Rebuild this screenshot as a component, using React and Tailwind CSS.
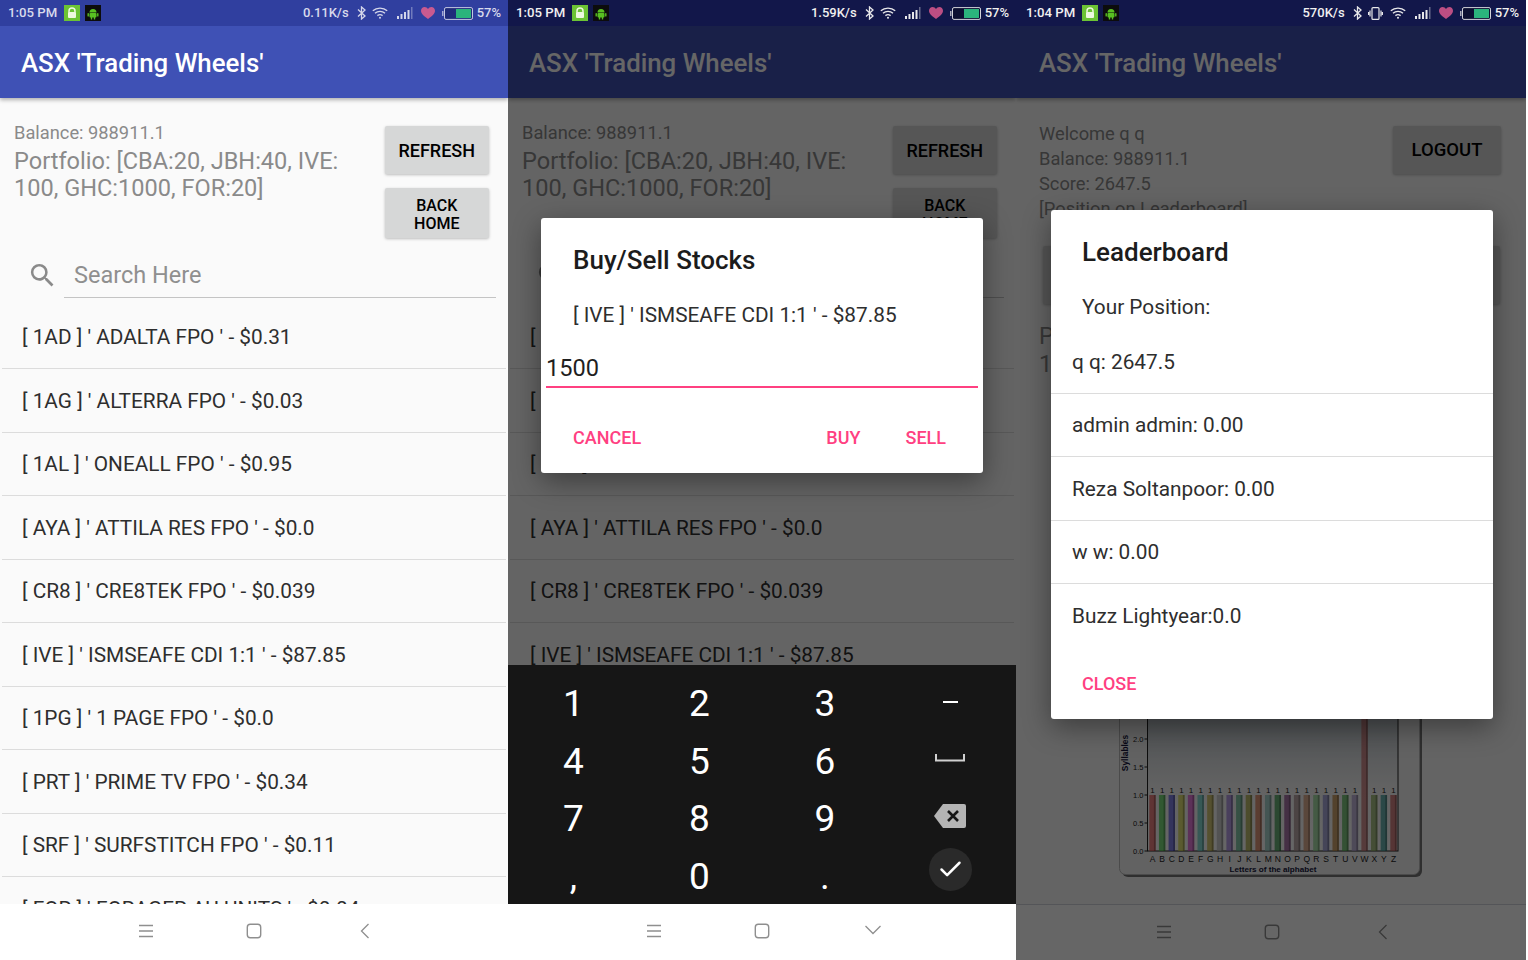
import { Check } from 'lucide-react';

const font = { fontFamily: 'Roboto, sans-serif' };

const stocks = [
  "[ 1AD ] ' ADALTA FPO ' - $0.31",
  "[ 1AG ] ' ALTERRA FPO ' - $0.03",
  "[ 1AL ] ' ONEALL FPO ' - $0.95",
  "[ AYA ] ' ATTILA RES FPO ' - $0.0",
  "[ CR8 ] ' CRE8TEK FPO ' - $0.039",
  "[ IVE ] ' ISMSEAFE CDI 1:1 ' - $87.85",
  "[ 1PG ] ' 1 PAGE FPO ' - $0.0",
  "[ PRT ] ' PRIME TV FPO ' - $0.34",
  "[ SRF ] ' SURFSTITCH FPO ' - $0.11",
  "[ FOR ] ' FORAGER AU UNITS ' - $0.04",
];

const leaders = ['q q: 2647.5', 'admin admin: 0.00', 'Reza Soltanpoor: 0.00', 'w w: 0.00', 'Buzz Lightyear:0.0'];

const letters = 'ABCDEFGHIJKLMNOPQRSTUVWXYZ'.split('');
const barColors = ['#e85a5a', '#4fd04f', '#5a5ae0', '#d8d84a', '#e04fd0', '#62d0c8', '#c8b84a', '#c0c0c0', '#a080e0', '#60b890', '#a8a840', '#d87850', '#90c8c0', '#3c9c50', '#904c90', '#a89090', '#d89870', '#90d890', '#9090d0', '#c08840', '#58b858', '#b0a0d0', '#c87070', '#90b060', '#3c9c98', '#c85c5c'];

function AppIcons() {
  return (
    <div className="flex items-center gap-[5px]">
      <svg width="16" height="16" viewBox="0 0 16 16">
        <rect width="16" height="16" fill="#6cc334" />
        <path d="M5 7.500V6a3 3 0 0 1 6 0v1.500" fill="none" stroke="#eef8e0" strokeWidth="1.500" />
        <rect x="4" y="7" width="8" height="6" rx="1" fill="#eef8e0" />
      </svg>
      <svg width="16" height="16" viewBox="0 0 16 16">
        <rect width="16" height="16" fill="#0c0c0c" />
        <path d="M4.500 7.500a3.500 3.500 0 0 1 7 0z" fill="#58c022" />
        <rect x="4.500" y="8" width="7" height="4.500" rx="1" fill="#58c022" />
        <rect x="2.500" y="8" width="1.400" height="3.600" rx=".7" fill="#58c022" />
        <rect x="12.100" y="8" width="1.400" height="3.600" rx=".7" fill="#58c022" />
        <rect x="5.800" y="12" width="1.400" height="2.500" fill="#58c022" />
        <rect x="8.800" y="12" width="1.400" height="2.500" fill="#58c022" />
      </svg>
    </div>
  );
}

function StatusBar({ time, speed, dim, vibrate, left = 'pl-2' }) {
  const stroke = dim ? '#e8e8ea' : '#d4d6ea';
  return (
    <div className={`relative z-20 h-[26px] shrink-0 flex items-center pr-[7px] ${left} ${dim ? 'bg-[#12174a] text-[#f0f0f0]' : 'bg-[#303f9f] text-[#d8daec]'}`}>
      <span className="text-[13.200px] font-medium mr-[7px]">{time}</span>
      <AppIcons />
      <div className="flex-1" />
      <span className="text-[13px] font-medium mr-2">{speed}</span>
      <svg width="9" height="14" viewBox="0 0 9 14" fill="none" stroke={stroke} strokeWidth="1.300" className="mr-[6px]">
        <path d="M1 3.500l7 6.500-3.500 3V1L8 4 1 10.500" />
      </svg>
      {vibrate && (
        <svg width="15" height="13" viewBox="0 0 15 13" fill="none" stroke={stroke} strokeWidth="1.200" className="mr-[7px]">
          <rect x="4" y=".6" width="7" height="11.800" rx="1" />
          <path d="M2 3.500v6M.6 5v3M13 3.500v6M14.400 5v3" />
        </svg>
      )}
      <svg width="16" height="12" viewBox="0 0 16 12" fill="none" stroke={stroke} strokeWidth="1.400" className="mr-[9px]">
        <path d="M.8 3.800c4-3.600 10.400-3.600 14.400 0M3 6.200c2.800-2.400 7.200-2.400 10 0M5.400 8.600c1.500-1.100 3.700-1.100 5.200 0" />
        <circle cx="8" cy="10.800" r="1" fill={stroke} stroke="none" />
      </svg>
      <svg width="16" height="12" viewBox="0 0 16 12" className="mr-[8px]">
        <rect x="0" y="9" width="2" height="3" fill={stroke} />
        <rect x="3.500" y="7" width="2" height="5" fill={stroke} />
        <rect x="7" y="5" width="2" height="7" fill={stroke} />
        <rect x="10.500" y="3" width="2" height="9" fill={stroke} />
        <rect x="14" y="0" width="1.500" height="12" fill={stroke} opacity=".4" />
      </svg>
      <svg width="14" height="12" viewBox="0 0 14 12" className="mr-[7px]">
        <path d="M7 12C2.500 8.600 0 6.400 0 3.700 0 1.500 1.700 0 3.600 0 5 0 6.300.8 7 2c.7-1.200 2-2 3.400-2C12.300 0 14 1.500 14 3.700 14 6.400 11.500 8.600 7 12z" fill={dim ? '#bc4e83' : '#c95a90'} />
      </svg>
      <svg width="31" height="13" viewBox="0 0 31 13" className="mr-[4px]">
        <rect x="0" y="4" width="1.500" height="5" fill={stroke} opacity=".7" />
        <rect x="2.500" y=".6" width="28" height="11.800" rx="1.500" fill={dim ? '#0c0f30' : '#1f2a78'} stroke={stroke} strokeWidth="1" opacity=".9" />
        <rect x="14" y="2" width="15" height="9" fill="#2bb47c" />
      </svg>
      <span className="text-[13px] font-medium">57%</span>
    </div>
  );
}

function AppBar({ left = 'pl-[21px]' }) {
  return (
    <div className={`relative z-0 h-[72px] shrink-0 bg-[#3f51b5] flex items-center pt-[3px] shadow-[0_2px_4px_rgba(0,0,0,0.3)] ${left}`}>
      <span className="text-[25.800px] font-medium text-white">ASX 'Trading Wheels'</span>
    </div>
  );
}

function NavBar({ dim, down, height = 'h-[56px]' }) {
  return (
    <div className={`shrink-0 bg-white flex items-start pt-[19px] relative ${height} ${dim ? 'border-t border-gray-300 pl-[2px]' : ''}`}>
      <svg width="16" height="14" viewBox="0 0 16 14" fill="none" stroke="#8f8f8f" strokeWidth="1.300" className="ml-[138px] mt-[1px]">
        <path d="M1 1.500h14M1 7h14M1 12.500h14" />
      </svg>
      <svg width="16" height="16" viewBox="0 0 16 16" fill="none" stroke="#8f8f8f" strokeWidth="1.400" className="ml-[92px]">
        <rect x="1.300" y="1.300" width="13.400" height="13.400" rx="3" />
      </svg>
      {down ? (
        <svg width="18" height="12" viewBox="0 0 18 12" fill="none" stroke="#8f8f8f" strokeWidth="1.300" className="ml-[94px] mt-[1px]">
          <path d="M1.500 2L9 9.500 16.500 2" />
        </svg>
      ) : (
        <svg width="10" height="16" viewBox="0 0 10 16" fill="none" stroke="#8f8f8f" strokeWidth="1.300" className="ml-[98px]">
          <path d="M8.500 1L1.500 8l7 7" />
        </svg>
      )}
    </div>
  );
}

function GreyButton({ className, children }) {
  return (
    <div className={`bg-[#d6d7d7] rounded-[2px] shadow-[0_1px_3px_rgba(0,0,0,0.25)] flex items-center justify-center text-center font-medium text-black ${className}`}>
      {children}
    </div>
  );
}

function SearchIcon() {
  return (
    <svg width="31" height="31" viewBox="0 0 24 24" fill="#8a8a8a" className="mt-[15px] shrink-0">
      <path d="M15.500 14h-.79l-.28-.27A6.471 6.471 0 0 0 16 9.500 6.500 6.500 0 1 0 9.500 16c1.610 0 3.090-.59 4.230-1.570l.27.28v.79l5 4.990L20.490 19l-4.990-5zm-6 0C7.010 14 5 11.990 5 9.500S7.010 5 9.500 5 14 7.010 14 9.500 11.990 14 9.500 14z" />
    </svg>
  );
}

function StockScreen() {
  return (
    <div className="flex-1 min-h-0 overflow-hidden bg-[#fafafa]">
      <div className="h-[147px] flex pl-[14px] pr-[19px]">
        <div className="flex-1 pt-[22px] text-[#8a8a8a]">
          <div className="text-[18.300px] leading-[26px]">Balance: 988911.1</div>
          <div className="text-[23.560px] leading-[27px] w-[340px] pt-[2px]">Portfolio: [CBA:20, JBH:40, IVE: 100, GHC:1000, FOR:20]</div>
        </div>
        <div className="w-[104.500px] pt-[28px] flex flex-col gap-[14px]">
          <GreyButton className="h-[48px] text-[18px]">REFRESH</GreyButton>
          <GreyButton className="h-[50px] text-[16px] leading-[18px] pt-[3px]">BACK<br />HOME</GreyButton>
        </div>
      </div>
      <div className="h-[60.500px] flex items-start pl-[27px] pr-[12px]">
        <SearchIcon />
        <div className="ml-[6px] flex-1 h-[53px] border-b border-[#c4c4c4] pl-[10px] pt-[14px] text-[23.500px] leading-[32px] text-[#8f8f8f]">Search Here</div>
      </div>
      <div className="mx-[2px]">
        {stocks.map(s => (
          <div key={s} className="h-[63.500px] border-b border-[#dcdcdc] flex items-center pl-[20px] pt-[2px] text-[20.800px] text-[#2e2e2e] whitespace-nowrap">{s}</div>
        ))}
      </div>
    </div>
  );
}

function Chart() {
  const baseY = 451;
  const unit = 56;
  const barX = i => 30.300 + i * 9.640;
  return (
    <svg width="304" height="478" viewBox="0 0 304 478">
      <defs>
        <linearGradient id="plot" x1="0" y1="0" x2="0" y2="1">
          <stop offset="0" stopColor="#b8c0cc" />
          <stop offset=".7" stopColor="#c6cdd2" />
          <stop offset=".86" stopColor="#f8f8f8" />
          <stop offset="1" stopColor="#ffffff" />
        </linearGradient>
      </defs>
      <rect x="3" y="3" width="300" height="474" rx="6" fill="#777" />
      <rect x=".5" y=".5" width="300" height="474" rx="6" fill="#f4f4f4" stroke="#bbb" />
      <rect x="28.500" y="20" width="250.500" height={baseY - 20} fill="url(#plot)" stroke="#222" />
      {letters.map((l, i) => {
        const isW = l === 'W';
        const h = isW ? unit * 3 : unit;
        return (
          <g key={l}>
            <rect x={barX(i)} y={baseY - h} width="6.400" height={h} fill={barColors[i]} opacity=".75" />
            <rect x={barX(i) + 4.600} y={baseY - h} width="1.800" height={h} fill="#000" opacity=".25" />
            <text x={barX(i) + 3.200} y={baseY + 11} fontSize="8.500" textAnchor="middle" fill="#222" fontFamily="Liberation Sans">{l}</text>
            {!isW && <text x={barX(i) + 3.200} y={baseY - h - 2} fontSize="8" textAnchor="middle" fill="#222" fontFamily="Liberation Sans">1</text>}
          </g>
        );
      })}
      {[0, 0.5, 1, 1.5, 2].map(v => (
        <g key={v}>
          <line x1="25.500" x2="28.500" y1={baseY - v * unit} y2={baseY - v * unit} stroke="#222" />
          <text x="24.500" y={baseY - v * unit + 2.500} fontSize="7.500" textAnchor="end" fill="#222" fontFamily="Liberation Sans">{v.toFixed(1)}</text>
        </g>
      ))}
      <text x="154" y="472" fontSize="8.100" fontWeight="700" textAnchor="middle" fill="#14143c" fontFamily="Liberation Sans">Letters of the alphabet</text>
      <text transform="rotate(-90 9 353)" x="9" y="353" fontSize="8.400" fontWeight="700" textAnchor="middle" fill="#14143c" fontFamily="Liberation Sans">Syllables</text>
    </svg>
  );
}

function HomeScreen() {
  return (
    <div className="flex-1 min-h-0 overflow-hidden bg-[#fafafa] pt-[22px]">
      <div className="flex pl-[23px] pr-[25px] h-[126px]">
        <div className="flex-1 text-[18.300px] leading-[25px] pt-[1px] text-[#8a8a8a]">
          <div>Welcome q q</div>
          <div>Balance: 988911.1</div>
          <div>Score: 2647.5</div>
          <div>[Position on Leaderboard]</div>
        </div>
        <GreyButton className="w-[108px] h-[48px] mt-[6px] text-[18.500px] pt-[2px]">LOGOUT</GreyButton>
      </div>
      <div className="pl-[27px] pr-[26px]">
        <GreyButton className="h-[58px] text-[18px]">LEADERBOARD</GreyButton>
      </div>
      <div className="pl-[23px] pt-[18px] text-[23.560px] leading-[28px] text-[#8a8a8a] w-[380px]">Portfolio: [CBA:20, JBH:40, IVE: 100, GHC:1000, FOR:20]</div>
      <div className="pl-[103px] pt-[22px]">
        <Chart />
      </div>
    </div>
  );
}

function Dimmer({ className }) {
  return <div className={`absolute left-0 right-0 bg-black/60 z-10 ${className}`} />;
}

function Keyboard() {
  const cols = [
    { x: 'w-[127px]', keys: ['1', '4', '7', ','] },
    { x: 'w-[125px]', keys: ['2', '5', '8', '0'] },
    { x: 'w-[126px]', keys: ['3', '6', '9', '.'] },
  ];
  return (
    <div className="relative z-20 h-[239px] shrink-0 bg-[#161616] flex pl-[2px] text-white text-[37px] leading-[58px] pt-[10px]">
      {cols.map((c, i) => (
        <div key={i} className={`${c.x} flex flex-col items-center`}>
          {c.keys.map(k => <div key={k} className="h-[57.500px]">{k}</div>)}
        </div>
      ))}
      <div className="w-[124px] flex flex-col items-center">
        <div className="h-[57.500px] flex items-center">
          <div className="w-[15px] h-[2.500px] bg-white mt-[-4px]" />
        </div>
        <div className="h-[57.500px] flex items-center">
          <svg width="30" height="8" viewBox="0 0 30 8" fill="none" stroke="#d0d0d0" strokeWidth="2" className="mt-[-6px]"><path d="M1 0v6.500h28V0" /></svg>
        </div>
        <div className="h-[57.500px] flex items-center">
          <svg width="32" height="24" viewBox="0 0 32 24" className="mt-[-6px]">
            <path d="M9 0h21a2 2 0 0 1 2 2v20a2 2 0 0 1-2 2H9L0 12z" fill="#b4b4b4" />
            <path d="M14 7l10 10M24 7L14 17" stroke="#161616" strokeWidth="2.600" />
          </svg>
        </div>
        <div className="w-[43px] h-[43px] rounded-full bg-[#2a2a2a] flex items-center justify-center">
          <Check size={27} strokeWidth={2.200} color="#fff" />
        </div>
      </div>
    </div>
  );
}

function BuyDialog() {
  return (
    <div className="absolute z-20 left-[33px] top-[218px] w-[442px] h-[255px] bg-white rounded-[3px] shadow-[0_8px_28px_rgba(0,0,0,0.4)] flex flex-col">
      <div className="pl-[32px] pt-[25px] text-[26px] leading-[34px] font-medium text-[#1c1c1c]">Buy/Sell Stocks</div>
      <div className="pl-[32px] pt-[24px] text-[20.800px] leading-[28px] text-[#2e2e2e]">[ IVE ] ' ISMSEAFE CDI 1:1 ' - $87.85</div>
      <div className="ml-[5px] mr-[5px] mt-[23px] h-[36px] border-b-[2.500px] border-[#ff4081] text-[23.600px] leading-[32px] text-[#1f1f1f]">1500</div>
      <div className="flex items-center pl-[32px] pr-[37px] mt-[36px] text-[#ff4081] text-[18px] font-medium">
        <span>CANCEL</span>
        <span className="ml-auto">BUY</span>
        <span className="ml-[45px]">SELL</span>
      </div>
    </div>
  );
}

function LeaderDialog() {
  return (
    <div className="absolute z-20 left-[35px] top-[210px] w-[442px] h-[509px] bg-white rounded-[3px] shadow-[0_8px_28px_rgba(0,0,0,0.4)] flex flex-col">
      <div className="pl-[31px] pt-[25px] text-[26px] leading-[34px] font-medium text-[#1c1c1c]">Leaderboard</div>
      <div className="pl-[31px] pt-[24px] text-[20.800px] leading-[28px] text-[#2e2e2e]">Your Position:</div>
      <div className="mt-[9px]">
        {leaders.map((l, i) => (
          <div key={l} className={`h-[63.500px] flex items-center pl-[21px] pt-[2px] text-[20.800px] text-[#2e2e2e] ${i < 4 ? 'border-b border-[#dcdcdc]' : ''}`}>{l}</div>
        ))}
      </div>
      <div className="pl-[31px] pt-[22px] text-[#ff4081] text-[18px] font-medium">CLOSE</div>
    </div>
  );
}

export default function App() {
  return (
    <div className="flex w-[1526px] h-[960px] bg-white overflow-hidden" style={font}>
      <div className="w-[508px] h-[960px] flex flex-col overflow-hidden relative">
        <StatusBar time="1:05 PM" speed="0.11K/s" />
        <AppBar />
        <StockScreen />
        <NavBar />
      </div>

      <div className="w-[508px] h-[958px] flex flex-col overflow-hidden relative">
        <StatusBar time="1:05 PM" speed="1.59K/s" dim />
        <AppBar />
        <StockScreen />
        <Dimmer className="top-0 bottom-[293px]" />
        <Keyboard />
        <NavBar down height="h-[54px]" />
        <BuyDialog />
      </div>

      <div className="w-[510px] h-[960px] flex flex-col overflow-hidden relative">
        <StatusBar time="1:04 PM" speed="570K/s" dim vibrate left="pl-[10px]" />
        <AppBar left="pl-[23px]" />
        <HomeScreen />
        <NavBar dim />
        <Dimmer className="top-0 bottom-0" />
        <LeaderDialog />
      </div>
    </div>
  );
}
